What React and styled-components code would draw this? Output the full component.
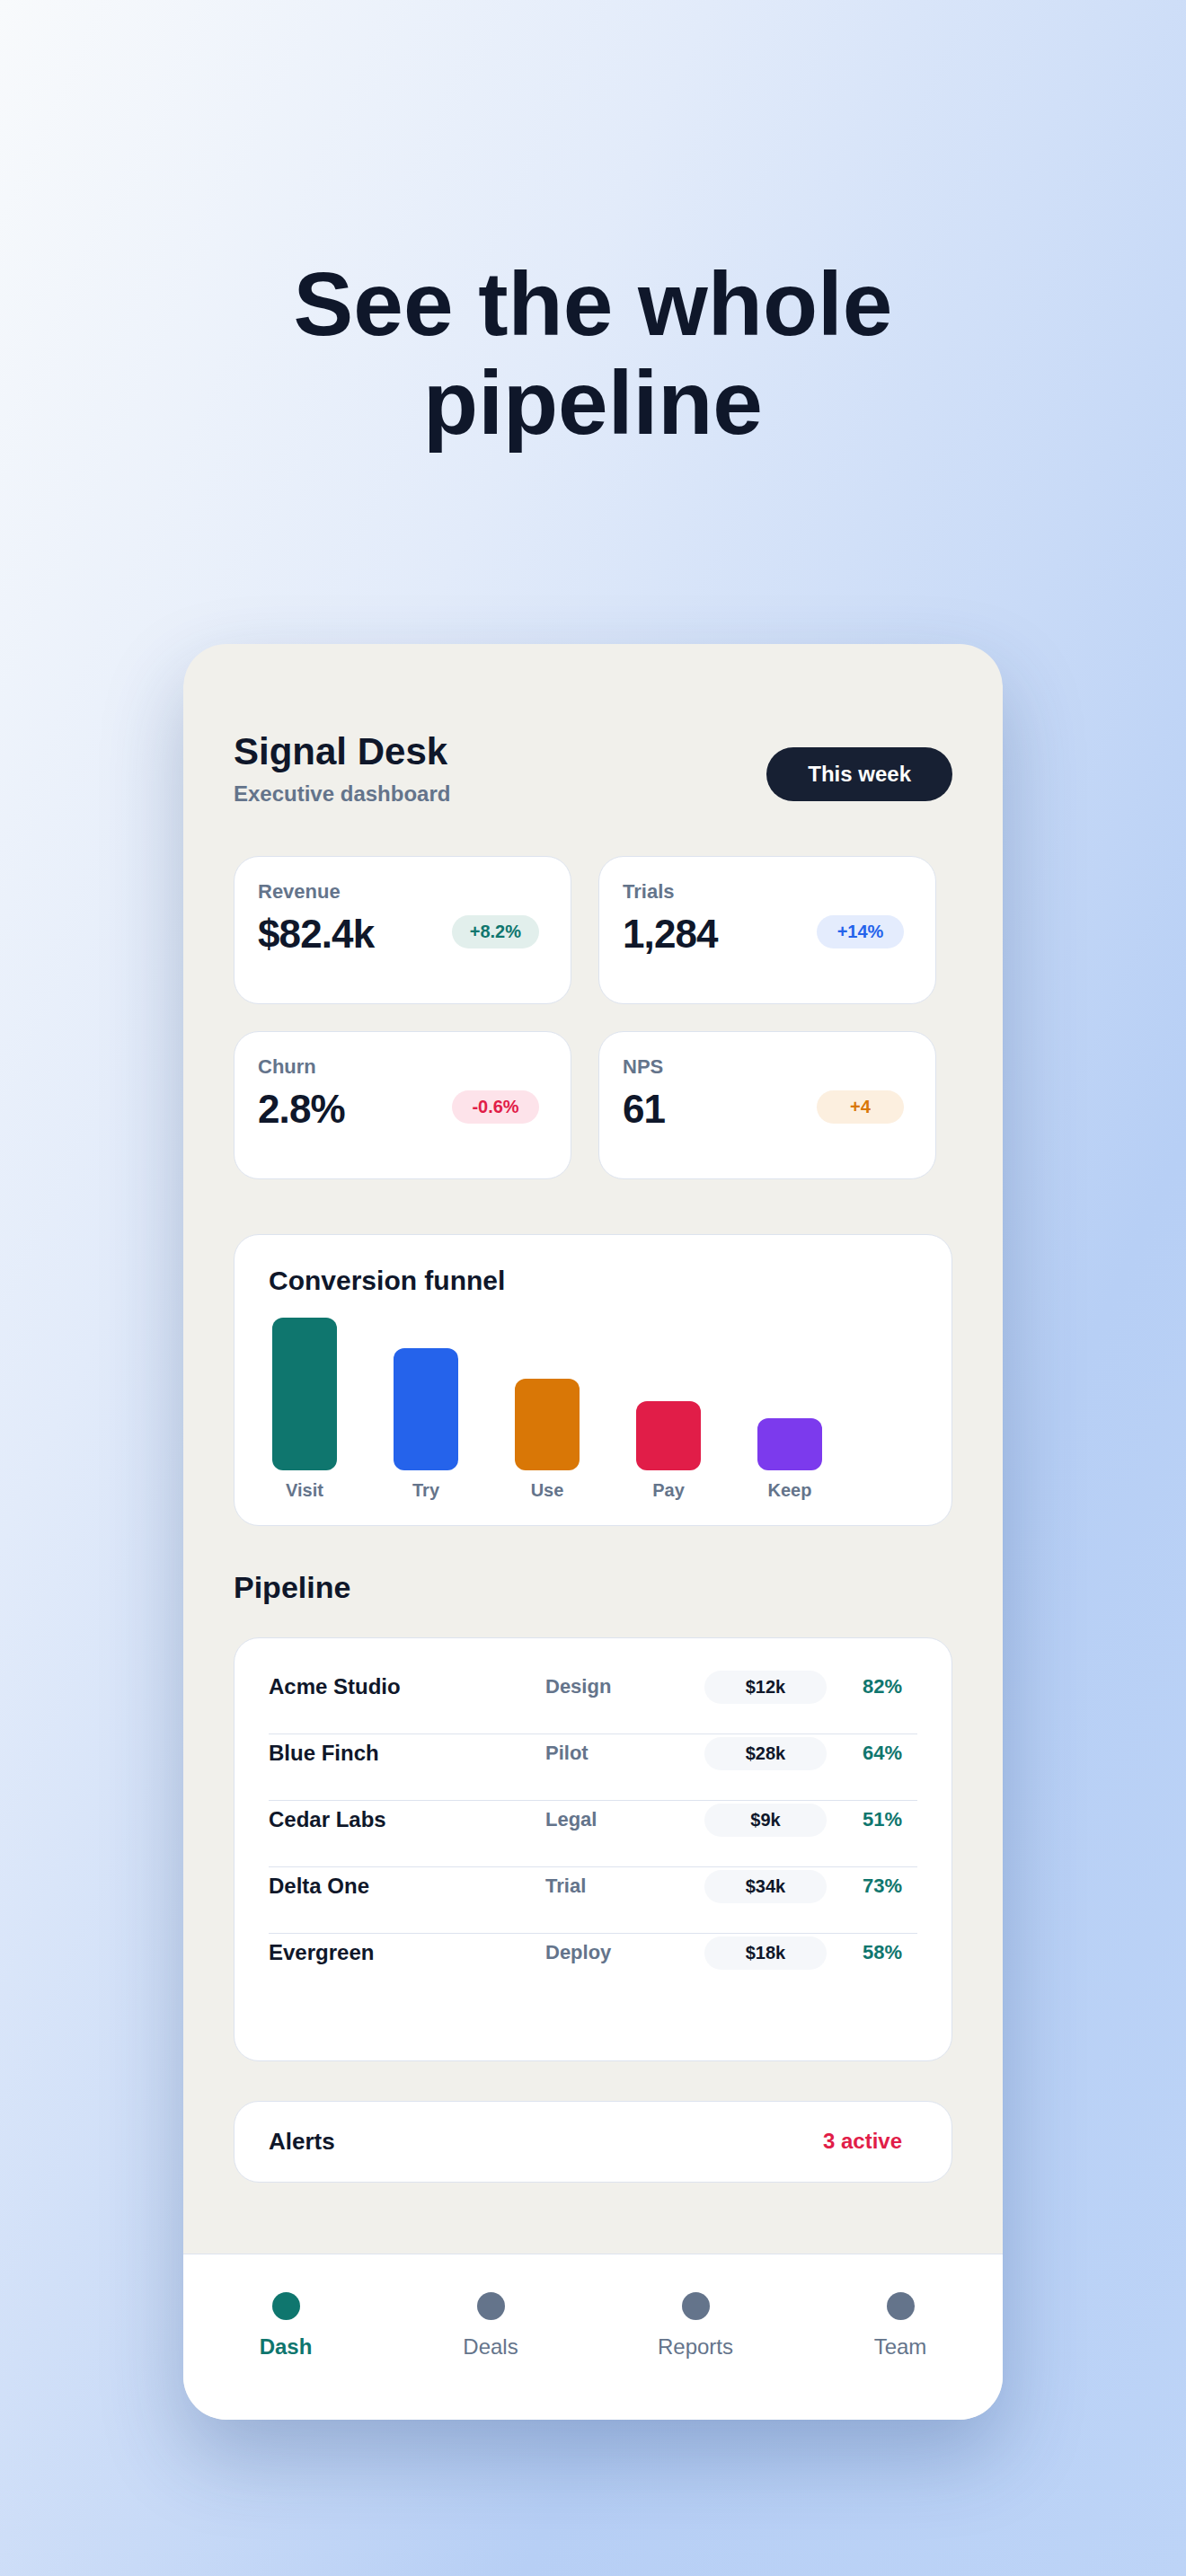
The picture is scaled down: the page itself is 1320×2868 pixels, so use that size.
import React from 'react'
import styled, { createGlobalStyle } from 'styled-components'

const GlobalStyle = createGlobalStyle`
  * { box-sizing: border-box; }
  body {
    margin: 0;
    font-family: "Liberation Sans", Arial, sans-serif;
    color: #0f172a;
  }
`

const Page = styled.div`
  min-height: 2868px;
  padding-top: 283px;
  display: flex;
  flex-direction: column;
  align-items: center;
  background: linear-gradient(to bottom right, #f8fafc 0%, #e2ebfa 30%, #b7cff5 72%, #bdd4f7 100%);
`

const Headline = styled.h1`
  margin: 0;
  max-width: 900px;
  font-size: 100px;
  line-height: 110px;
  font-weight: 700;
  text-align: center;
  color: #0f172a;
`

const Phone = styled.div`
  width: 912px;
  margin-top: 214px;
  border-radius: 48px;
  overflow: hidden;
  background: #f1f0eb;
  box-shadow: 0 40px 90px rgba(30, 60, 120, 0.28);
`

const Content = styled.div`
  padding: 95px 56px 79px;
`

const Header = styled.div`
  display: flex;
  justify-content: space-between;
  align-items: center;
`

const Title = styled.h2`
  margin: 0;
  font-size: 42px;
  line-height: 50px;
  font-weight: 700;
  color: #0f172a;
`

const Subtitle = styled.div`
  margin-top: 8px;
  font-size: 24px;
  line-height: 1.2;
  font-weight: 700;
  color: #64748b;
`

const RangeButton = styled.button`
  margin-top: 14px;
  height: 60px;
  padding: 0 46px;
  border: none;
  border-radius: 30px;
  background: #172033;
  color: #fff;
  font-family: inherit;
  font-size: 24px;
  font-weight: 700;
`

const StatGrid = styled.div`
  margin-top: 54px;
  display: grid;
  grid-template-columns: repeat(2, 376px);
  gap: 30px;
`

const StatCard = styled.div`
  height: 165px;
  padding: 26px 35px 0 26px;
  background: #fff;
  border: 1px solid #dde3ee;
  border-radius: 28px;
`

const StatLabel = styled.div`
  font-size: 22px;
  line-height: 1.2;
  font-weight: 700;
  color: #64748b;
`

const StatRow = styled.div`
  margin-top: 8px;
  display: flex;
  justify-content: space-between;
  align-items: center;
`

const StatValue = styled.div`
  font-size: 44px;
  line-height: 1.2;
  font-weight: 700;
  letter-spacing: -0.02em;
  color: #0f172a;
`

const tones = {
  teal: { bg: '#e2efec', fg: '#0f766e' },
  blue: { bg: '#e4ecfd', fg: '#2563eb' },
  red: { bg: '#fde3ea', fg: '#e11d48' },
  orange: { bg: '#fcefdf', fg: '#d97706' },
}

const Badge = styled.span`
  margin-bottom: 7px;
  height: 37px;
  min-width: 97px;
  padding: 0 20px;
  display: inline-flex;
  align-items: center;
  justify-content: center;
  border-radius: 19px;
  font-size: 20px;
  font-weight: 700;
  background: ${p => tones[p.tone].bg};
  color: ${p => tones[p.tone].fg};
`

const Panel = styled.div`
  background: #fff;
  border: 1px solid #dde3ee;
  border-radius: 28px;
`

const FunnelPanel = styled(Panel)`
  margin-top: 61px;
  padding: 33px 38px 27px;
`

const PanelTitle = styled.h3`
  margin: 0 0 23px;
  font-size: 30px;
  line-height: 36px;
  font-weight: 700;
  color: #0f172a;
`

const Bars = styled.div`
  display: flex;
  gap: 55px;
`

const BarColumn = styled.div`
  width: 80px;
  display: flex;
  flex-direction: column;
  align-items: center;
`

const BarTrack = styled.div`
  height: 170px;
  display: flex;
  align-items: flex-end;
`

const Bar = styled.div`
  width: 72px;
  border-radius: 12px;
  background: ${p => p.color};
`

const BarLabel = styled.div`
  margin-top: 10px;
  font-size: 20px;
  line-height: 24px;
  font-weight: 700;
  color: #64748b;
`

const SectionTitle = styled.h3`
  margin: 48px 0 35px;
  font-size: 34px;
  line-height: 1.2;
  font-weight: 700;
  color: #0f172a;
`

const PipelinePanel = styled(Panel)`
  padding: 33px 38px 68px;
`

const DealRow = styled.div`
  display: grid;
  grid-template-columns: 308px 177px 136px 1fr;
  align-items: center;
  padding: 3px 0 33px;
  & + & {
    border-top: 1px solid #dde3ee;
  }
`

const DealName = styled.div`
  font-size: 24px;
  font-weight: 700;
  color: #0f172a;
`

const DealStage = styled.div`
  font-size: 22px;
  font-weight: 700;
  color: #64748b;
`

const Amount = styled.div`
  height: 37px;
  display: flex;
  align-items: center;
  justify-content: center;
  border-radius: 19px;
  background: #f5f7fa;
  font-size: 20px;
  font-weight: 700;
  color: #0f172a;
`

const Chance = styled.div`
  text-align: right;
  padding-right: 17px;
  font-size: 22px;
  font-weight: 700;
  color: #0f766e;
`

const AlertsPanel = styled(Panel)`
  margin-top: 44px;
  padding: 29px 55px 29px 38px;
  display: flex;
  justify-content: space-between;
  align-items: center;
`

const AlertsTitle = styled.div`
  font-size: 26px;
  line-height: 1.2;
  font-weight: 700;
  color: #0f172a;
`

const AlertsCount = styled.div`
  font-size: 24px;
  font-weight: 700;
  color: #e11d48;
`

const TabBar = styled.nav`
  height: 185px;
  padding-top: 42px;
  display: grid;
  grid-template-columns: repeat(4, 1fr);
  align-items: start;
  background: #fff;
  border-top: 1px solid #dde3ee;
`

const Tab = styled.div`
  display: flex;
  flex-direction: column;
  align-items: center;
  gap: 16px;
`

const TabDot = styled.span`
  width: 31px;
  height: 31px;
  border-radius: 50%;
  background: ${p => (p.active ? '#0f766e' : '#64748b')};
`

const TabLabel = styled.span`
  font-size: 24px;
  line-height: 1.2;
  font-weight: ${p => (p.active ? 700 : 400)};
  color: ${p => (p.active ? '#0f766e' : '#64748b')};
`

const stats = [
  { label: 'Revenue', value: '$82.4k', delta: '+8.2%', tone: 'teal' },
  { label: 'Trials', value: '1,284', delta: '+14%', tone: 'blue' },
  { label: 'Churn', value: '2.8%', delta: '-0.6%', tone: 'red' },
  { label: 'NPS', value: '61', delta: '+4', tone: 'orange' },
]

const funnel = [
  { label: 'Visit', pct: 1, color: '#0f766e' },
  { label: 'Try', pct: 0.8, color: '#2563eb' },
  { label: 'Use', pct: 0.6, color: '#d97706' },
  { label: 'Pay', pct: 0.45, color: '#e11d48' },
  { label: 'Keep', pct: 0.34, color: '#7c3aed' },
]

const deals = [
  ['Acme Studio', 'Design', '$12k', '82%'],
  ['Blue Finch', 'Pilot', '$28k', '64%'],
  ['Cedar Labs', 'Legal', '$9k', '51%'],
  ['Delta One', 'Trial', '$34k', '73%'],
  ['Evergreen', 'Deploy', '$18k', '58%'],
]

const tabs = ['Dash', 'Deals', 'Reports', 'Team']

export default function App() {
  return (
    <Page>
      <GlobalStyle />
      <Headline>See the whole pipeline</Headline>
      <Phone>
        <Content>
          <Header>
            <div>
              <Title>Signal Desk</Title>
              <Subtitle>Executive dashboard</Subtitle>
            </div>
            <RangeButton>This week</RangeButton>
          </Header>

          <StatGrid>
            {stats.map(s => (
              <StatCard key={s.label}>
                <StatLabel>{s.label}</StatLabel>
                <StatRow>
                  <StatValue>{s.value}</StatValue>
                  <Badge tone={s.tone}>{s.delta}</Badge>
                </StatRow>
              </StatCard>
            ))}
          </StatGrid>

          <FunnelPanel>
            <PanelTitle>Conversion funnel</PanelTitle>
            <Bars>
              {funnel.map(f => (
                <BarColumn key={f.label}>
                  <BarTrack>
                    <Bar color={f.color} style={{ height: Math.round(170 * f.pct) }} />
                  </BarTrack>
                  <BarLabel>{f.label}</BarLabel>
                </BarColumn>
              ))}
            </Bars>
          </FunnelPanel>

          <SectionTitle>Pipeline</SectionTitle>
          <PipelinePanel>
            {deals.map(([name, stage, amount, chance]) => (
              <DealRow key={name}>
                <DealName>{name}</DealName>
                <DealStage>{stage}</DealStage>
                <Amount>{amount}</Amount>
                <Chance>{chance}</Chance>
              </DealRow>
            ))}
          </PipelinePanel>

          <AlertsPanel>
            <AlertsTitle>Alerts</AlertsTitle>
            <AlertsCount>3 active</AlertsCount>
          </AlertsPanel>
        </Content>

        <TabBar>
          {tabs.map((t, i) => (
            <Tab key={t}>
              <TabDot active={i === 0} />
              <TabLabel active={i === 0}>{t}</TabLabel>
            </Tab>
          ))}
        </TabBar>
      </Phone>
    </Page>
  )
}
